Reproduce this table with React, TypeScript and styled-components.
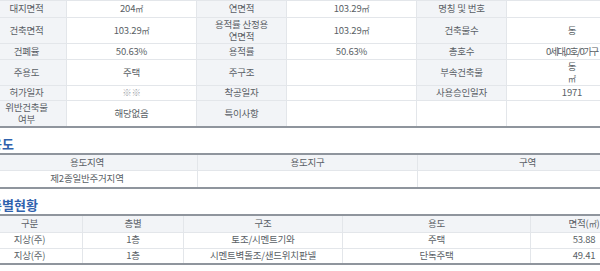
import React from "react";
import styled, { createGlobalStyle } from "styled-components";

const GlobalStyle = createGlobalStyle`
  html, body {
    margin: 0;
    padding: 0;
    background: #ffffff;
    overflow: hidden;
  }
  body {
    font-family: "Noto Sans CJK KR", "Noto Sans", sans-serif;
  }
`;

// the screenshot is a crop of a wider page, so the content starts left of the view
const Page = styled.div`
  width: 661px;
  margin-left: -24px;
`;

const Table = styled.table<{ $noTop?: boolean; $inset?: number }>`
  width: calc(100% - ${(p) => p.$inset || 0}px);
  margin-left: ${(p) => p.$inset || 0}px;
  table-layout: fixed;
  border-collapse: collapse;
  border-top: ${(p) => (p.$noTop ? "none" : "2px solid #8f959d")};
  border-bottom: 2px solid #8f959d;
  font-size: 9.5px;
  line-height: 11.5px;
  color: #5a5f66;
`;

const Row = styled.tr<{ $h?: number }>`
  height: ${(p) => (p.$h ? `${p.$h}px` : "auto")};
`;

const Cell = styled.td<{ $label?: boolean; $muted?: boolean; $tight?: boolean }>`
  padding: 1px 3px;
  border: 1px solid #e3e6ea;
  text-align: center;
  vertical-align: middle;
  white-space: nowrap;
  background: ${(p) => (p.$label ? "#f2f4f7" : "#ffffff")};
  color: ${(p) => (p.$muted ? "#a5a9ae" : "#5a5f66")};
  letter-spacing: ${(p) => (p.$tight ? "-1.4px" : "-0.2px")};
`;

const HeadCell = styled.th`
  padding: 1px 3px;
  border: 1px solid #e3e6ea;
  border-top: none;
  text-align: center;
  font-weight: normal;
  white-space: nowrap;
  background: #f2f4f7;
  color: #5a5f66;
  letter-spacing: -0.2px;
`;

const Heading = styled.h3`
  margin: 0;
  padding: 8px 0 0 14px;
  height: 25px;
  box-sizing: border-box;
  font-size: 13px;
  line-height: 16px;
  font-weight: bold;
  color: #2f62ad;
`;

const Unit = styled.span`
  font-size: 8px;
`;

export default function App() {
  return (
    <>
      <GlobalStyle />
      <Page>
        <Table $noTop $inset={10}>
          <colgroup>
            <col style={{ width: 80 }} />
            <col style={{ width: 130 }} />
            <col style={{ width: 90 }} />
            <col style={{ width: 130 }} />
            <col style={{ width: 90 }} />
            <col style={{ width: 131 }} />
          </colgroup>
          <tbody>
            <Row $h={17}>
              <Cell $label>대지면적</Cell>
              <Cell>204<Unit>㎡</Unit></Cell>
              <Cell $label>연면적</Cell>
              <Cell>103.29<Unit>㎡</Unit></Cell>
              <Cell $label>명칭 및 번호</Cell>
              <Cell></Cell>
            </Row>
            <Row $h={26}>
              <Cell $label>건축면적</Cell>
              <Cell>103.29<Unit>㎡</Unit></Cell>
              <Cell $label>
                용적률 산정용
                <br />
                연면적
              </Cell>
              <Cell>103.29<Unit>㎡</Unit></Cell>
              <Cell $label>건축물수</Cell>
              <Cell>동</Cell>
            </Row>
            <Row $h={16}>
              <Cell $label>건폐율</Cell>
              <Cell>50.63%</Cell>
              <Cell $label>용적률</Cell>
              <Cell>50.63%</Cell>
              <Cell $label>총호수</Cell>
              <Cell $tight>0세대,0호/0가구</Cell>
            </Row>
            <Row $h={26}>
              <Cell $label>주용도</Cell>
              <Cell>주택</Cell>
              <Cell $label>주구조</Cell>
              <Cell></Cell>
              <Cell $label>부속건축물</Cell>
              <Cell>
                동
                <br />
                <Unit>㎡</Unit>
              </Cell>
            </Row>
            <Row $h={15}>
              <Cell $label>허가일자</Cell>
              <Cell $muted>※※</Cell>
              <Cell $label>착공일자</Cell>
              <Cell></Cell>
              <Cell $label>사용승인일자</Cell>
              <Cell>1971</Cell>
            </Row>
            <Row $h={26}>
              <Cell $label>
                위반건축물
                <br />
                여부
              </Cell>
              <Cell>해당없음</Cell>
              <Cell $label>특이사항</Cell>
              <Cell></Cell>
              <Cell></Cell>
              <Cell></Cell>
            </Row>
          </tbody>
        </Table>

        <Heading>용도</Heading>
        <Table>
          <colgroup>
            <col style={{ width: 221 }} />
            <col style={{ width: 220 }} />
            <col style={{ width: 220 }} />
          </colgroup>
          <thead>
            <Row $h={16}>
              <HeadCell>용도지역</HeadCell>
              <HeadCell>용도지구</HeadCell>
              <HeadCell>구역</HeadCell>
            </Row>
          </thead>
          <tbody>
            <Row $h={18}>
              <Cell>제2종일반주거지역</Cell>
              <Cell></Cell>
              <Cell></Cell>
            </Row>
          </tbody>
        </Table>

        <Heading>층별현황</Heading>
        <Table>
          <colgroup>
            <col style={{ width: 106 }} />
            <col style={{ width: 101 }} />
            <col style={{ width: 159 }} />
            <col style={{ width: 188 }} />
            <col style={{ width: 107 }} />
          </colgroup>
          <thead>
            <Row $h={17}>
              <HeadCell>구분</HeadCell>
              <HeadCell>층별</HeadCell>
              <HeadCell>구조</HeadCell>
              <HeadCell>용도</HeadCell>
              <HeadCell>
                면적(<Unit>㎡</Unit>)
              </HeadCell>
            </Row>
          </thead>
          <tbody>
            <Row $h={16}>
              <Cell>지상(주)</Cell>
              <Cell>1층</Cell>
              <Cell>토조/시멘트기와</Cell>
              <Cell>주택</Cell>
              <Cell>53.88</Cell>
            </Row>
            <Row $h={16}>
              <Cell>지상(주)</Cell>
              <Cell>1층</Cell>
              <Cell>시멘트벽돌조/샌드위치판넬</Cell>
              <Cell>단독주택</Cell>
              <Cell>49.41</Cell>
            </Row>
          </tbody>
        </Table>
      </Page>
    </>
  );
}
